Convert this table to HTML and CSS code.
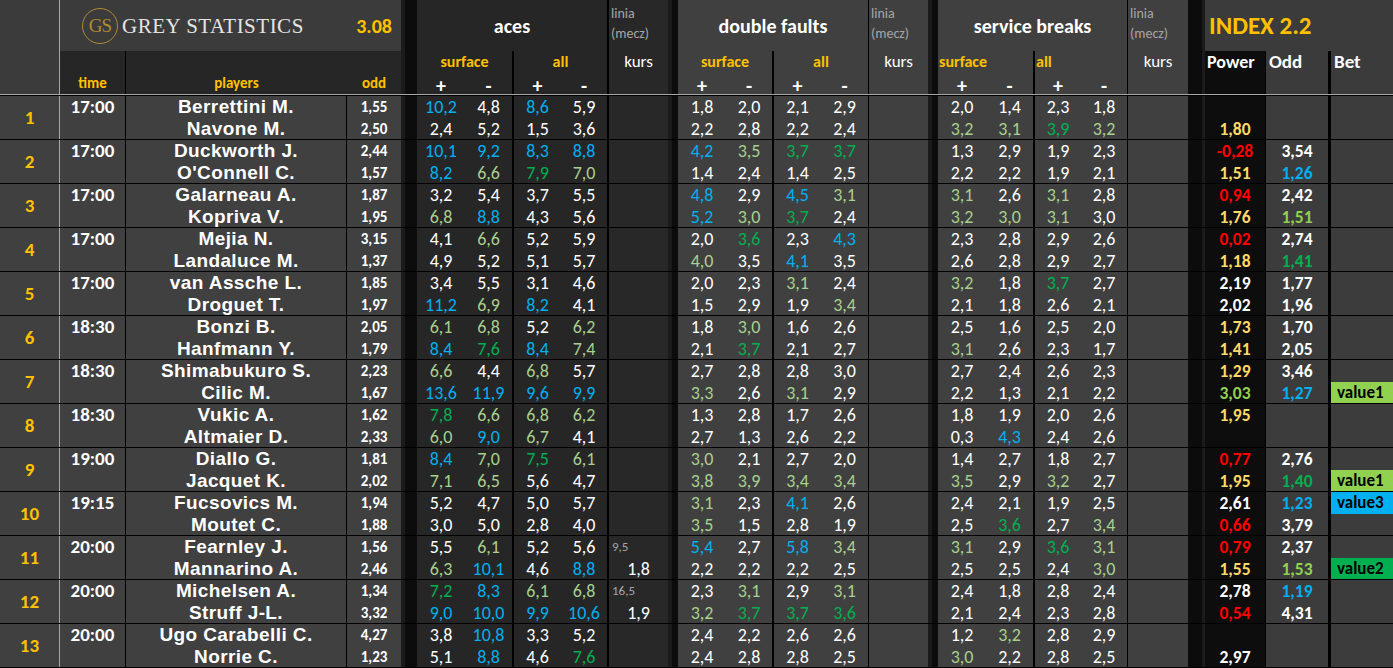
FILE: index.html
```html
<!DOCTYPE html>
<html lang="pl">
<head>
<meta charset="utf-8">
<title>Grey Statistics</title>
<link rel="stylesheet" href="styles.css">
</head>
<body>
<div class="sheet">
  <div class="cols head">
    <div class="hn"></div>
    <div class="brand">
      <div class="title"><div class="logo">GS</div><span class="bname">GREY STATISTICS</span><span class="ver">3.08</span></div>
      <div class="lab tl">time</div>
      <div class="lab">players</div>
      <div class="lab">odd</div>
    </div>
    <i class="s"></i>
    <div class="hg ha">
      <div class="ttl r2">aces</div>
      <div class="sub r2">surface</div>
      <div class="sub r2">all</div>
      <div class="sg">+</div><div class="sg r2">-</div><div class="sg">+</div><div class="sg r2">-</div>
    </div>
    <div class="hk hk1"><div class="ln">linia<br>(mecz)</div><div class="kr">kurs</div><div></div></div>
    <i class="s"></i>
    <div class="hg hd">
      <div class="ttl r1">double faults</div>
      <div class="sub r2">surface</div>
      <div class="sub r1">all</div>
      <div class="sg">+</div><div class="sg r2">-</div><div class="sg">+</div><div class="sg r1">-</div>
    </div>
    <div class="hk"><div class="ln">linia<br>(mecz)</div><div class="kr">kurs</div><div></div></div>
    <i class="s"></i>
    <div class="hg hs">
      <div class="ttl r1">service breaks</div>
      <div class="sub lf r2">surface</div>
      <div class="sub lf r1">all</div>
      <div class="sg">+</div><div class="sg r2">-</div><div class="sg">+</div><div class="sg r1">-</div>
    </div>
    <div class="hk"><div class="ln">linia<br>(mecz)</div><div class="kr">kurs</div><div></div></div>
    <i class="s s4"></i>
    <div class="idx">
      <div class="it">INDEX 2.2</div>
      <div class="ih pwh">Power</div>
      <div class="ih odh">Odd</div>
      <div class="ih bth">Bet</div>
    </div>
  </div>

  <!-- 1 -->
  <div class="cols m">
    <div class="n">1</div>
    <div class="t v"><span>17:00</span></div>
    <div class="p v"><span>Berrettini M.</span><span>Navone M.</span></div>
    <div class="o v"><span>1,55</span><span>2,50</span></div>
    <i class="s"></i>
    <div class="g ga v"><span class="b">10,2</span><span>4,8</span><span class="b">8,6</span><span>5,9</span><span>2,4</span><span>5,2</span><span>1,5</span><span>3,6</span></div>
    <div class="k k1 v"><span></span><span></span></div>
    <i class="s"></i>
    <div class="g gd v"><span>1,8</span><span>2,0</span><span>2,1</span><span>2,9</span><span>2,2</span><span>2,8</span><span>2,2</span><span>2,4</span></div>
    <div class="k v"><span></span><span></span></div>
    <i class="s"></i>
    <div class="g gs v"><span>2,0</span><span>1,4</span><span>2,3</span><span>1,8</span><span class="l">3,2</span><span class="l">3,1</span><span class="e">3,9</span><span class="l">3,2</span></div>
    <div class="k v"><span></span><span></span></div>
    <i class="s s4"></i>
    <div class="pw v"><span></span><span class="y">1,80</span></div>
    <div class="od v"><span></span><span></span></div>
    <div class="bt v"><span></span><span></span></div>
  </div>

  <!-- 2 -->
  <div class="cols m">
    <div class="n">2</div>
    <div class="t v"><span>17:00</span></div>
    <div class="p v"><span>Duckworth J.</span><span>O'Connell C.</span></div>
    <div class="o v"><span>2,44</span><span>1,57</span></div>
    <i class="s"></i>
    <div class="g ga v"><span class="b">10,1</span><span class="b">9,2</span><span class="b">8,3</span><span class="b">8,8</span><span class="b">8,2</span><span class="l">6,6</span><span class="e">7,9</span><span class="l">7,0</span></div>
    <div class="k k1 v"><span></span><span></span></div>
    <i class="s"></i>
    <div class="g gd v"><span class="b">4,2</span><span class="l">3,5</span><span class="e">3,7</span><span class="e">3,7</span><span>1,4</span><span>2,4</span><span>1,4</span><span>2,5</span></div>
    <div class="k v"><span></span><span></span></div>
    <i class="s"></i>
    <div class="g gs v"><span>1,3</span><span>2,9</span><span>1,9</span><span>2,3</span><span>2,2</span><span>2,2</span><span>1,9</span><span>2,1</span></div>
    <div class="k v"><span></span><span></span></div>
    <i class="s s4"></i>
    <div class="pw v"><span class="r">-0,28</span><span class="y">1,51</span></div>
    <div class="od v"><span>3,54</span><span class="b">1,26</span></div>
    <div class="bt v"><span></span><span></span></div>
  </div>

  <!-- 3 -->
  <div class="cols m">
    <div class="n">3</div>
    <div class="t v"><span>17:00</span></div>
    <div class="p v"><span>Galarneau A.</span><span>Kopriva V.</span></div>
    <div class="o v"><span>1,87</span><span>1,95</span></div>
    <i class="s"></i>
    <div class="g ga v"><span>3,2</span><span>5,4</span><span>3,7</span><span>5,5</span><span class="l">6,8</span><span class="b">8,8</span><span>4,3</span><span>5,6</span></div>
    <div class="k k1 v"><span></span><span></span></div>
    <i class="s"></i>
    <div class="g gd v"><span class="b">4,8</span><span>2,9</span><span class="b">4,5</span><span class="l">3,1</span><span class="b">5,2</span><span class="l">3,0</span><span class="e">3,7</span><span>2,4</span></div>
    <div class="k v"><span></span><span></span></div>
    <i class="s"></i>
    <div class="g gs v"><span class="l">3,1</span><span>2,6</span><span class="l">3,1</span><span>2,8</span><span class="l">3,2</span><span class="l">3,0</span><span class="l">3,1</span><span>3,0</span></div>
    <div class="k v"><span></span><span></span></div>
    <i class="s s4"></i>
    <div class="pw v"><span class="r">0,94</span><span class="y">1,76</span></div>
    <div class="od v"><span>2,42</span><span class="lv">1,51</span></div>
    <div class="bt v"><span></span><span></span></div>
  </div>

  <!-- 4 -->
  <div class="cols m">
    <div class="n">4</div>
    <div class="t v"><span>17:00</span></div>
    <div class="p v"><span>Mejia N.</span><span>Landaluce M.</span></div>
    <div class="o v"><span>3,15</span><span>1,37</span></div>
    <i class="s"></i>
    <div class="g ga v"><span>4,1</span><span class="l">6,6</span><span>5,2</span><span>5,9</span><span>4,9</span><span>5,2</span><span>5,1</span><span>5,7</span></div>
    <div class="k k1 v"><span></span><span></span></div>
    <i class="s"></i>
    <div class="g gd v"><span>2,0</span><span class="e">3,6</span><span>2,3</span><span class="b">4,3</span><span class="l">4,0</span><span>3,5</span><span class="b">4,1</span><span>3,5</span></div>
    <div class="k v"><span></span><span></span></div>
    <i class="s"></i>
    <div class="g gs v"><span>2,3</span><span>2,8</span><span>2,9</span><span>2,6</span><span>2,6</span><span>2,8</span><span>2,9</span><span>2,7</span></div>
    <div class="k v"><span></span><span></span></div>
    <i class="s s4"></i>
    <div class="pw v"><span class="r">0,02</span><span class="y">1,18</span></div>
    <div class="od v"><span>2,74</span><span class="e">1,41</span></div>
    <div class="bt v"><span></span><span></span></div>
  </div>

  <!-- 5 -->
  <div class="cols m">
    <div class="n">5</div>
    <div class="t v"><span>17:00</span></div>
    <div class="p v"><span>van Assche L.</span><span>Droguet T.</span></div>
    <div class="o v"><span>1,85</span><span>1,97</span></div>
    <i class="s"></i>
    <div class="g ga v"><span>3,4</span><span>5,5</span><span>3,1</span><span>4,6</span><span class="b">11,2</span><span class="l">6,9</span><span class="b">8,2</span><span>4,1</span></div>
    <div class="k k1 v"><span></span><span></span></div>
    <i class="s"></i>
    <div class="g gd v"><span>2,0</span><span>2,3</span><span class="l">3,1</span><span>2,4</span><span>1,5</span><span>2,9</span><span>1,9</span><span class="l">3,4</span></div>
    <div class="k v"><span></span><span></span></div>
    <i class="s"></i>
    <div class="g gs v"><span class="l">3,2</span><span>1,8</span><span class="e">3,7</span><span>2,7</span><span>2,1</span><span>1,8</span><span>2,6</span><span>2,1</span></div>
    <div class="k v"><span></span><span></span></div>
    <i class="s s4"></i>
    <div class="pw v"><span>2,19</span><span>2,02</span></div>
    <div class="od v"><span>1,77</span><span>1,96</span></div>
    <div class="bt v"><span></span><span></span></div>
  </div>

  <!-- 6 -->
  <div class="cols m">
    <div class="n">6</div>
    <div class="t v"><span>18:30</span></div>
    <div class="p v"><span>Bonzi B.</span><span>Hanfmann Y.</span></div>
    <div class="o v"><span>2,05</span><span>1,79</span></div>
    <i class="s"></i>
    <div class="g ga v"><span class="l">6,1</span><span class="l">6,8</span><span>5,2</span><span class="l">6,2</span><span class="b">8,4</span><span class="e">7,6</span><span class="b">8,4</span><span class="l">7,4</span></div>
    <div class="k k1 v"><span></span><span></span></div>
    <i class="s"></i>
    <div class="g gd v"><span>1,8</span><span class="l">3,0</span><span>1,6</span><span>2,6</span><span>2,1</span><span class="e">3,7</span><span>2,1</span><span>2,7</span></div>
    <div class="k v"><span></span><span></span></div>
    <i class="s"></i>
    <div class="g gs v"><span>2,5</span><span>1,6</span><span>2,5</span><span>2,0</span><span class="l">3,1</span><span>2,6</span><span>2,3</span><span>1,7</span></div>
    <div class="k v"><span></span><span></span></div>
    <i class="s s4"></i>
    <div class="pw v"><span class="y">1,73</span><span class="y">1,41</span></div>
    <div class="od v"><span>1,70</span><span>2,05</span></div>
    <div class="bt v"><span></span><span></span></div>
  </div>

  <!-- 7 -->
  <div class="cols m">
    <div class="n">7</div>
    <div class="t v"><span>18:30</span></div>
    <div class="p v"><span>Shimabukuro S.</span><span>Cilic M.</span></div>
    <div class="o v"><span>2,23</span><span>1,67</span></div>
    <i class="s"></i>
    <div class="g ga v"><span class="l">6,6</span><span>4,4</span><span class="l">6,8</span><span>5,7</span><span class="b">13,6</span><span class="b">11,9</span><span class="b">9,6</span><span class="b">9,9</span></div>
    <div class="k k1 v"><span></span><span></span></div>
    <i class="s"></i>
    <div class="g gd v"><span>2,7</span><span>2,8</span><span>2,8</span><span>3,0</span><span class="l">3,3</span><span>2,6</span><span class="l">3,1</span><span>2,9</span></div>
    <div class="k v"><span></span><span></span></div>
    <i class="s"></i>
    <div class="g gs v"><span>2,7</span><span>2,4</span><span>2,6</span><span>2,3</span><span>2,2</span><span>1,3</span><span>2,1</span><span>2,2</span></div>
    <div class="k v"><span></span><span></span></div>
    <i class="s s4"></i>
    <div class="pw v"><span class="y">1,29</span><span class="lv">3,03</span></div>
    <div class="od v"><span>3,46</span><span class="b">1,27</span></div>
    <div class="bt v"><span></span><span class="badge val1">value1</span></div>
  </div>

  <!-- 8 -->
  <div class="cols m">
    <div class="n">8</div>
    <div class="t v"><span>18:30</span></div>
    <div class="p v"><span>Vukic A.</span><span>Altmaier D.</span></div>
    <div class="o v"><span>1,62</span><span>2,33</span></div>
    <i class="s"></i>
    <div class="g ga v"><span class="e">7,8</span><span class="l">6,6</span><span class="l">6,8</span><span class="l">6,2</span><span class="l">6,0</span><span class="b">9,0</span><span class="l">6,7</span><span>4,1</span></div>
    <div class="k k1 v"><span></span><span></span></div>
    <i class="s"></i>
    <div class="g gd v"><span>1,3</span><span>2,8</span><span>1,7</span><span>2,6</span><span>2,7</span><span>1,3</span><span>2,6</span><span>2,2</span></div>
    <div class="k v"><span></span><span></span></div>
    <i class="s"></i>
    <div class="g gs v"><span>1,8</span><span>1,9</span><span>2,0</span><span>2,6</span><span>0,3</span><span class="b">4,3</span><span>2,4</span><span>2,6</span></div>
    <div class="k v"><span></span><span></span></div>
    <i class="s s4"></i>
    <div class="pw v"><span class="y">1,95</span><span></span></div>
    <div class="od v"><span></span><span></span></div>
    <div class="bt v"><span></span><span></span></div>
  </div>

  <!-- 9 -->
  <div class="cols m">
    <div class="n">9</div>
    <div class="t v"><span>19:00</span></div>
    <div class="p v"><span>Diallo G.</span><span>Jacquet K.</span></div>
    <div class="o v"><span>1,81</span><span>2,02</span></div>
    <i class="s"></i>
    <div class="g ga v"><span class="b">8,4</span><span class="l">7,0</span><span class="e">7,5</span><span class="l">6,1</span><span class="l">7,1</span><span class="l">6,5</span><span>5,6</span><span>4,7</span></div>
    <div class="k k1 v"><span></span><span></span></div>
    <i class="s"></i>
    <div class="g gd v"><span class="l">3,0</span><span>2,1</span><span>2,7</span><span>2,0</span><span class="l">3,8</span><span class="l">3,9</span><span class="l">3,4</span><span class="l">3,4</span></div>
    <div class="k v"><span></span><span></span></div>
    <i class="s"></i>
    <div class="g gs v"><span>1,4</span><span>2,7</span><span>1,8</span><span>2,7</span><span class="l">3,5</span><span>2,9</span><span class="l">3,2</span><span>2,7</span></div>
    <div class="k v"><span></span><span></span></div>
    <i class="s s4"></i>
    <div class="pw v"><span class="r">0,77</span><span class="y">1,95</span></div>
    <div class="od v"><span>2,76</span><span class="e">1,40</span></div>
    <div class="bt v"><span></span><span class="badge val1">value1</span></div>
  </div>

  <!-- 10 -->
  <div class="cols m">
    <div class="n">10</div>
    <div class="t v"><span>19:15</span></div>
    <div class="p v"><span>Fucsovics M.</span><span>Moutet C.</span></div>
    <div class="o v"><span>1,94</span><span>1,88</span></div>
    <i class="s"></i>
    <div class="g ga v"><span>5,2</span><span>4,7</span><span>5,0</span><span>5,7</span><span>3,0</span><span>5,0</span><span>2,8</span><span>4,0</span></div>
    <div class="k k1 v"><span></span><span></span></div>
    <i class="s"></i>
    <div class="g gd v"><span class="l">3,1</span><span>2,3</span><span class="b">4,1</span><span>2,6</span><span class="l">3,5</span><span>1,5</span><span>2,8</span><span>1,9</span></div>
    <div class="k v"><span></span><span></span></div>
    <i class="s"></i>
    <div class="g gs v"><span>2,4</span><span>2,1</span><span>1,9</span><span>2,5</span><span>2,5</span><span class="e">3,6</span><span>2,7</span><span class="l">3,4</span></div>
    <div class="k v"><span></span><span></span></div>
    <i class="s s4"></i>
    <div class="pw v"><span>2,61</span><span class="r">0,66</span></div>
    <div class="od v"><span class="b">1,23</span><span>3,79</span></div>
    <div class="bt v"><span class="badge val3">value3</span><span></span></div>
  </div>

  <!-- 11 -->
  <div class="cols m">
    <div class="n">11</div>
    <div class="t v"><span>20:00</span></div>
    <div class="p v"><span>Fearnley J.</span><span>Mannarino A.</span></div>
    <div class="o v"><span>1,56</span><span>2,46</span></div>
    <i class="s"></i>
    <div class="g ga v"><span>5,5</span><span class="l">6,1</span><span>5,2</span><span>5,6</span><span class="l">6,3</span><span class="b">10,1</span><span>4,6</span><span class="b">8,8</span></div>
    <div class="k k1 v"><span class="sm">9,5</span><span>1,8</span></div>
    <i class="s"></i>
    <div class="g gd v"><span class="b">5,4</span><span>2,7</span><span class="b">5,8</span><span class="l">3,4</span><span>2,2</span><span>2,2</span><span>2,2</span><span>2,5</span></div>
    <div class="k v"><span></span><span></span></div>
    <i class="s"></i>
    <div class="g gs v"><span class="l">3,1</span><span>2,9</span><span class="e">3,6</span><span class="l">3,1</span><span>2,5</span><span>2,5</span><span>2,4</span><span class="l">3,0</span></div>
    <div class="k v"><span></span><span></span></div>
    <i class="s s4"></i>
    <div class="pw v"><span class="r">0,79</span><span class="y">1,55</span></div>
    <div class="od v"><span>2,37</span><span class="lv">1,53</span></div>
    <div class="bt v"><span></span><span class="badge val2">value2</span></div>
  </div>

  <!-- 12 -->
  <div class="cols m">
    <div class="n">12</div>
    <div class="t v"><span>20:00</span></div>
    <div class="p v"><span>Michelsen A.</span><span>Struff J-L.</span></div>
    <div class="o v"><span>1,34</span><span>3,32</span></div>
    <i class="s"></i>
    <div class="g ga v"><span class="e">7,2</span><span class="b">8,3</span><span class="l">6,1</span><span class="l">6,8</span><span class="b">9,0</span><span class="b">10,0</span><span class="b">9,9</span><span class="b">10,6</span></div>
    <div class="k k1 v"><span class="sm">16,5</span><span>1,9</span></div>
    <i class="s"></i>
    <div class="g gd v"><span>2,3</span><span class="l">3,1</span><span>2,9</span><span class="l">3,1</span><span class="l">3,2</span><span class="e">3,7</span><span class="e">3,7</span><span class="e">3,6</span></div>
    <div class="k v"><span></span><span></span></div>
    <i class="s"></i>
    <div class="g gs v"><span>2,4</span><span>1,8</span><span>2,8</span><span>2,4</span><span>2,1</span><span>2,4</span><span>2,3</span><span>2,8</span></div>
    <div class="k v"><span></span><span></span></div>
    <i class="s s4"></i>
    <div class="pw v"><span>2,78</span><span class="r">0,54</span></div>
    <div class="od v"><span class="b">1,19</span><span>4,31</span></div>
    <div class="bt v"><span></span><span></span></div>
  </div>

  <!-- 13 -->
  <div class="cols m">
    <div class="n">13</div>
    <div class="t v"><span>20:00</span></div>
    <div class="p v"><span>Ugo Carabelli C.</span><span>Norrie C.</span></div>
    <div class="o v"><span>4,27</span><span>1,23</span></div>
    <i class="s"></i>
    <div class="g ga v"><span>3,8</span><span class="b">10,8</span><span>3,3</span><span>5,2</span><span>5,1</span><span class="b">8,8</span><span>4,6</span><span class="e">7,6</span></div>
    <div class="k k1 v"><span></span><span></span></div>
    <i class="s"></i>
    <div class="g gd v"><span>2,4</span><span>2,2</span><span>2,6</span><span>2,6</span><span>2,4</span><span>2,8</span><span>2,8</span><span>2,5</span></div>
    <div class="k v"><span></span><span></span></div>
    <i class="s"></i>
    <div class="g gs v"><span>1,2</span><span class="l">3,2</span><span>2,8</span><span>2,9</span><span class="l">3,0</span><span>2,2</span><span>2,8</span><span>2,5</span></div>
    <div class="k v"><span></span><span></span></div>
    <i class="s s4"></i>
    <div class="pw v"><span></span><span>2,97</span></div>
    <div class="od v"><span></span><span></span></div>
    <div class="bt v"><span></span><span></span></div>
  </div>
</div>
</body>
</html>
```

FILE: styles.css
```css
* { box-sizing: border-box; margin: 0; padding: 0; }
html, body { background: #000; }
body {
  width: 1393px;
  height: 668px;
  overflow: hidden;
  font-family: Carlito, Calibri, Lato, "Liberation Sans", sans-serif;
  color: #fff;
}
.cols {
  display: grid;
  grid-template-columns: 60px 66px 221px 54px 16px 192px 59px 10px 191px 59px 10px 190px 60px 17px 61px 65px 62px;
}

/* strips */
.s { display: block; background: #0c0c0c; border-left: 4px solid #1b1b1b; }
.s.s4 { border-left: 0; border-right: 3px solid #1b1b1b; }

.r1 { border-right: 1px solid #000; }
.r2 { border-right: 2px solid #000; }

/* header */
.head { height: 95px; border-bottom: 1px solid #a6a6a6; margin-bottom: 1px; }
.hn { background: #3b3b3b; border-right: 1px solid #a6a6a6; }
.brand { grid-column: span 3; display: grid; grid-template-columns: 66px 221px 54px; grid-template-rows: 51px 43px; }
.title { grid-column: 1 / -1; background: #3b3b3b; display: flex; align-items: center; padding: 0 9px 0 22px; }
.logo {
  width: 36px; height: 36px; border: 1.5px solid #b08b30; border-radius: 50%;
  display: flex; align-items: center; justify-content: center;
  font-family: "Liberation Serif", serif; font-size: 19px; color: #b08b30; letter-spacing: -1px;
}
.bname { margin-left: 4px; font-family: "Liberation Serif", serif; font-size: 21px; color: #e4e4e4; letter-spacing: 0.5px; line-height: 24px; }
.ver { margin-left: auto; font-size: 20px; font-weight: bold; color: #ffc000; line-height: 24px; }
.lab {
  background: #262626; color: #ffc000; font-weight: bold; font-size: 15px; line-height: 18px;
  display: flex; align-items: flex-end; justify-content: center; padding-bottom: 2px;
}
.lab.tl { border-right: 1px solid #000; }

.hg { display: grid; grid-template-rows: 51px 22px 21px; }
.ha { background: #262626; grid-template-columns: 48px 49px 47px 48px; }
.hd { background: #404040; grid-template-columns: 48px 48px 47px 48px; }
.hs { background: #404040; grid-template-columns: 48px 49px 46px 47px; }
.ttl { grid-column: 1 / -1; font-size: 20px; font-weight: bold; display: flex; align-items: center; justify-content: center; }
.sub { grid-column: span 2; color: #ffc000; font-weight: bold; font-size: 16px; text-align: center; line-height: 22px; }
.sub.lf { text-align: left; padding-left: 1px; }
.sg { font-weight: bold; font-size: 20px; text-align: center; line-height: 18px; padding-top: 4px; }

.hk { display: grid; grid-template-rows: 51px 22px 21px; background: #404040; }
.hk.hk1 { background: #282828; }
.ln { color: #a6a6a6; font-size: 14px; line-height: 20px; padding: 4px 0 0 2px; }
.kr { font-size: 17px; text-align: center; line-height: 22px; }

.idx { grid-column: span 3; display: grid; grid-template-columns: 61px 65px 62px; grid-template-rows: 51px 43px; }
.it { grid-column: 1 / -1; background: #3b3b3b; color: #ffc000; font-weight: bold; font-size: 25px; display: flex; align-items: center; padding-left: 4px; }
.ih { font-weight: bold; font-size: 19px; line-height: 22px; padding-left: 3px; }
.pwh { background: #0d0d0d; border-right: 1px solid #000; font-size: 18px; padding-left: 2px; }
.odh { background: #3b3b3b; border-right: 3px solid #000; }
.bth { background: #3b3b3b; }

/* data rows */
.m { height: 44px; border-bottom: 1px solid #000; }
.v { display: grid; grid-template-rows: 22px 21px; }
.v > span { display: flex; align-items: center; justify-content: center; white-space: nowrap; line-height: 20px; }

.n {
  background: #404040; border-right: 1px solid #a6a6a6; color: #ffc000;
  font-weight: bold; font-size: 19px; display: flex; align-items: center; justify-content: center;
}
.t { background: #404040; border-right: 1px solid #000; font-weight: bold; font-size: 19px; }
.p {
  background: #404040; border-right: 1px solid #000; font-weight: bold;
  font-family: "Liberation Sans", Arial, sans-serif; font-size: 19px; letter-spacing: 0.4px;
}
.o { background: #404040; font-weight: bold; font-size: 15px; }

.g { font-size: 18px; }
.ga { background: #262626; grid-template-columns: 48px 49px 47px 48px; }
.gd { background: #404040; grid-template-columns: 48px 48px 47px 48px; }
.gs { background: #404040; grid-template-columns: 48px 49px 46px 47px; }
.ga > span:nth-child(4n+2), .ga > span:nth-child(4n) { border-right: 2px solid #000; }
.gd > span:nth-child(4n+2), .gs > span:nth-child(4n+2) { border-right: 2px solid #000; }
.gd > span:nth-child(4n), .gs > span:nth-child(4n) { border-right: 1px solid #000; }

.k { background: #404040; font-size: 18px; }
.k.k1 { background: #282828; }
.k > span.sm { justify-content: flex-start; padding-left: 3px; font-size: 13px; color: #a6a6a6; }

.pw { background: #0d0d0d; border-right: 1px solid #000; font-weight: bold; font-size: 17.5px; }
.od { background: #3c3c3c; border-right: 3px solid #000; font-weight: bold; font-size: 17.5px; }
.bt { background: #3c3c3c; }
.bt > span.badge { justify-content: flex-start; padding-left: 6px; color: #000; font-weight: bold; font-size: 17px; }
.val1 { background: #92d050; }
.val2 { background: #00b050; }
.val3 { background: #00b0f0; }

/* value colours */
.b { color: #00b0f0; }
.l { color: #a9d08e; }
.e { color: #00b050; }
.y { color: #ffd966; }
.r { color: #ff0000; }
.lv { color: #92d050; }
```
